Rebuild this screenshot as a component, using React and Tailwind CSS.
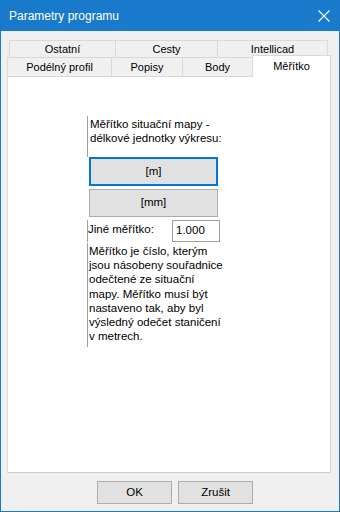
import React from "react";

const font = { fontFamily: '"Liberation Sans", Arial, sans-serif' };

function Tab({ w, children, last }) {
  return (
    <div
      className={`h-full flex items-center justify-center border-t border-l border-[#d9d9d9] bg-[#f0f0f0] text-[11px] text-black ${last ? "border-r" : ""}`}
      style={{ width: w }}
    >
      {children}
    </div>
  );
}

export default function App() {
  return (
    <div
      className="w-[340px] h-[512px] border border-[#1979ca] bg-[#f0f0f0] flex flex-col overflow-hidden"
      style={font}
    >
      {/* Title bar */}
      <div className="h-[30px] shrink-0 bg-[#1979ca] flex items-center justify-between pl-[8px] pr-[9px]">
        <span className="text-white text-[12px] leading-none">Parametry programu</span>
        <svg width="12" height="12" viewBox="0 0 12 12">
          <path d="M0.5 0.5 L11.5 11.5 M11.5 0.5 L0.5 11.5" stroke="#fff" strokeWidth="1.1" fill="none" />
        </svg>
      </div>

      {/* Body */}
      <div className="flex flex-col pt-[9px]">
        {/* Tab row 1 */}
        <div className="flex h-[17px] ml-[8px]">
          <Tab w={106}>Ostatní</Tab>
          <Tab w={102}>Cesty</Tab>
          <Tab w={111} last>Intellicad</Tab>
        </div>
        {/* Tab row 2 */}
        <div className="flex h-[19px] ml-[6px] items-end relative z-10">
          <Tab w={104}>Podélný profil</Tab>
          <Tab w={71}>Popisy</Tab>
          <Tab w={70}>Body</Tab>
          <div className="w-[79px] h-[22px] -mb-px bg-white border-t border-l border-r border-[#d9d9d9] flex justify-center pt-[2px] text-[11px] text-black">
            Měřítko
          </div>
        </div>

        {/* Panel */}
        <div className="w-[324px] h-[397px] ml-[6px] bg-white border border-[#d9d9d9] border-b-[#cfcfcf] flex flex-col pt-[39px] pl-[79px] text-[11.5px] text-black">
          <div className="w-[134px] h-[41px] border-l border-[#a0a0a0] pl-[2px] pt-[1px] leading-[14px] whitespace-nowrap">
            Měřítko situační mapy -<br />délkové jednotky výkresu:
          </div>
          <button className="ml-[2px] w-[129px] h-[29px] border-2 border-[#0078d7] bg-[#e1e1e1] flex items-center justify-center text-[11.5px]">
            [m]
          </button>
          <button className="mt-[3px] ml-[2px] w-[129px] h-[28px] border border-[#adadad] bg-[#e1e1e1] flex items-center justify-center text-[11.5px]">
            [mm]
          </button>
          <div className="mt-[3px] flex h-[22px] w-[133px]">
            <div className="flex-1 border-l border-[#a0a0a0] pt-[2px] leading-[14px] whitespace-nowrap">Jiné měřítko:</div>
            <div className="w-[48px] h-[22px] border border-[#a0a0a0] bg-white flex items-center pl-[3px]">1.000</div>
          </div>
          <div className="mt-[1px] w-[140px] h-[104px] border-l border-[#a0a0a0] pl-[1px] pt-[1px] leading-[14.2px] whitespace-nowrap">
            Měřítko je číslo, kterým<br />
            jsou násobeny souřadnice<br />
            odečtené ze situační<br />
            mapy. Měřítko musí být<br />
            nastaveno tak, aby byl<br />
            výsledný odečet staničení<br />
            v metrech.
          </div>
        </div>

        {/* Footer buttons */}
        <div className="flex gap-[6px] ml-[96px] mt-[8px]">
          <button className="w-[75px] h-[23px] border border-[#adadad] bg-[#e1e1e1] text-[11.5px] text-black flex items-center justify-center">
            OK
          </button>
          <button className="w-[75px] h-[23px] border border-[#adadad] bg-[#e1e1e1] text-[11.5px] text-black flex items-center justify-center">
            Zrušit
          </button>
        </div>
      </div>
    </div>
  );
}
